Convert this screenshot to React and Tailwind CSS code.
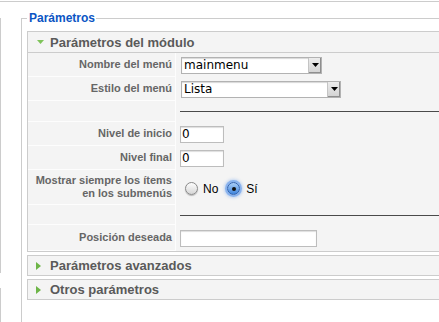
import React from "react";

function Select({ value, className }) {
  return (
    <div className={"ml-[1px] flex h-[17px] border border-[#b2b2b2] bg-white shadow-[inset_0_1px_1px_#d8d8d8] " + className}>
      <span className="flex-1 overflow-hidden whitespace-nowrap pl-[2px] font-['DejaVu_Sans',sans-serif] text-[12px] leading-[15px] text-black">
        {value}
      </span>
      <span className="flex h-full w-[13px] items-center justify-center border-l border-[#c4c4c4] bg-gradient-to-b from-[#ececec] to-[#d2d2d2] shadow-[inset_-1px_-1px_0_#8e8e8e]">
        <svg width="7" height="4" viewBox="0 0 7 4">
          <path d="M0 0H7L3.5 4Z" fill="#000" />
        </svg>
      </span>
    </div>
  );
}

function TextInput({ value, className }) {
  return (
    <div className={"flex h-[17px] items-center border border-[#bdbdbd] bg-white pl-px shadow-[inset_0_1px_1px_#dedede] font-['DejaVu_Sans',sans-serif] text-[12px] leading-[15px] text-black " + className}>
      {value}
    </div>
  );
}

function Label({ children }) {
  return (
    <div className="flex w-[148px] shrink-0 items-center justify-end border-r border-b border-[#fdfdfd] pr-[3px] text-right font-['Liberation_Sans',Arial,sans-serif] text-[11px] font-bold leading-[13px] text-[#666666]">
      {children}
    </div>
  );
}

function Row({ h, label, children }) {
  return (
    <div className={"flex " + h}>
      <Label>{label}</Label>
      <div className="flex min-w-0 flex-1 items-center pl-[4px]">{children}</div>
    </div>
  );
}

function DownArrow() {
  return (
    <svg width="7" height="4" viewBox="0 0 7 4" className="shrink-0">
      <path d="M0 0H7L3.5 4Z" fill="#7fc35a" />
    </svg>
  );
}

function RightArrow() {
  return (
    <svg width="5" height="8" viewBox="0 0 5 8" className="shrink-0">
      <path d="M0 0L5 4L0 8Z" fill="#6db547" />
    </svg>
  );
}

function CollapsedPanel({ title }) {
  return (
    <div className="mt-[3px] flex h-[21px] items-center border border-[#cccccc] bg-[#f4f4f4] pl-[8px]">
      <RightArrow />
      <span className="ml-[9px] font-['Liberation_Sans',Arial,sans-serif] text-[13px] font-bold leading-[15px] text-[#5a5a5a]">
        {title}
      </span>
    </div>
  );
}

export default function App() {
  return (
    <div className="h-[322px] w-[439px] overflow-hidden bg-white">
      <div className="mt-px h-px bg-[#cccccc]" />
      <div className="flex">
        <div className="flex w-px shrink-0 flex-col">
          <div className="mt-[16px] h-[255px] bg-[#cccccc]" />
          <div className="mt-[15px] h-[40px] bg-[#cccccc]" />
        </div>
        <fieldset className="ml-[20px] mt-[9px] w-[440px] shrink-0 border border-[#cccccc] px-[5px] pb-[8px] pt-[5px]">
          <legend className="pl-[2px] pr-px font-['Liberation_Sans',Arial,sans-serif] text-[12px] font-bold leading-[15px] text-[#0b55c4]">
            Parámetros
          </legend>

          <div className="border border-[#cccccc] bg-[#f4f4f4]">
            <div className="flex h-[21px] items-center border-b border-[#cccccc] pl-[9px]">
              <DownArrow />
              <span className="ml-[6px] font-['Liberation_Sans',Arial,sans-serif] text-[13px] font-bold leading-[15px] text-[#5a5a5a]">
                Parámetros del módulo
              </span>
            </div>

            <Row h="h-[24px]" label="Nombre del menú">
              <Select value="mainmenu" className="w-[141px]" />
            </Row>
            <Row h="h-[24px]" label="Estilo del menú">
              <Select value="Lista" className="w-[160px]" />
            </Row>
            <Row h="h-[21px]" label="">
              <div className="h-px flex-1 bg-[#4a4a4a]" />
            </Row>
            <Row h="h-[24px]" label="Nivel de inicio">
              <TextInput value="0" className="w-[44px]" />
            </Row>
            <Row h="h-[24px]" label="Nivel final">
              <TextInput value="0" className="w-[44px]" />
            </Row>
            <Row
              h="h-[35px]"
              label={
                <span>
                  Mostrar siempre los ítems
                  <br />
                  en los submenús
                </span>
              }
            >
              <div className="ml-[5px] mt-[2px] flex items-center font-['Liberation_Sans',Arial,sans-serif] text-[12px] leading-[14px] text-black">
                <span className="h-[13px] w-[13px] rounded-full border border-[#8a8a8a] bg-gradient-to-b from-[#fdfdfd] to-[#d6d6d6] shadow-[0_1px_1px_rgba(0,0,0,0.25)]" />
                <span className="ml-[5px]">No</span>
                <span className="ml-[9px] flex h-[13px] w-[13px] items-center justify-center rounded-full border border-[#2a5fb0] bg-gradient-to-b from-[#a9cdf5] to-[#3d84dc] shadow-[0_0_0_2px_rgba(90,150,235,0.55),0_0_3px_3px_rgba(90,150,235,0.35)]">
                  <span className="h-[4px] w-[4px] rounded-full bg-[#111]" />
                </span>
                <span className="ml-[6px]">Sí</span>
              </div>
            </Row>
            <Row h="h-[20px]" label="">
              <div className="h-px flex-1 bg-[#4a4a4a]" />
            </Row>
            <Row h="h-[26px]" label="Posición deseada">
              <TextInput value="" className="w-[137px]" />
            </Row>
          </div>

          <CollapsedPanel title="Parámetros avanzados" />
          <CollapsedPanel title="Otros parámetros" />
        </fieldset>
      </div>
    </div>
  );
}
